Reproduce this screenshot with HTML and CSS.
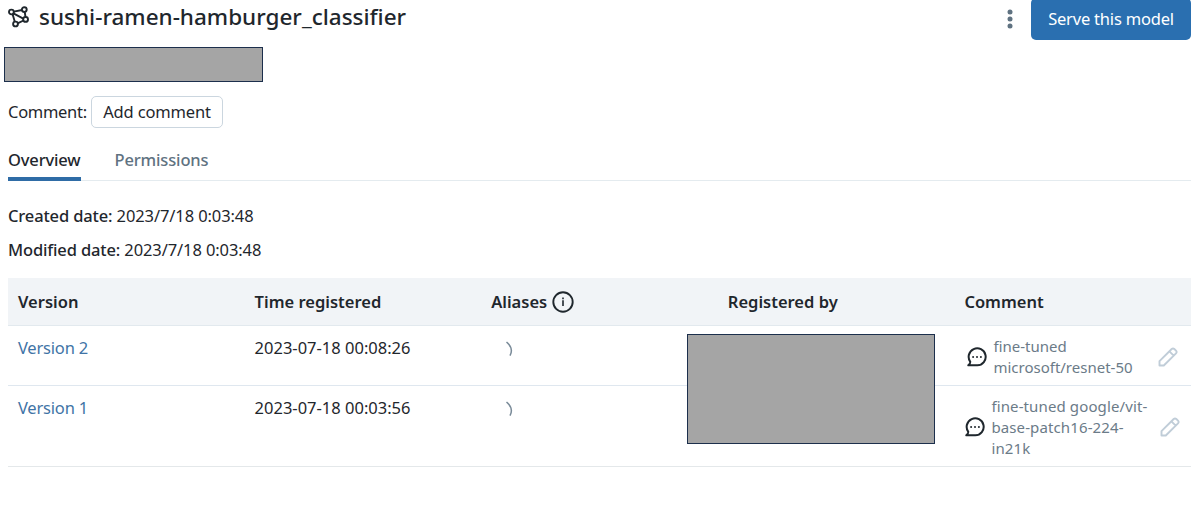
FILE: index.html
```html
<!DOCTYPE html>
<html lang="en">
<head>
    <meta charset="UTF-8">
    <meta name="viewport" content="width=device-width, initial-scale=1.0">
    <link rel="stylesheet" href="styles.css">
    <title>sushi-ramen-hamburger_classifier</title>
</head>
<body>
    <div class="page">
        <header class="header">
            <svg class="model-icon" width="22" height="22" viewBox="0 0 22 22" fill="none" stroke="#1f272d" stroke-width="1.9">
                <path d="M5.7 5.6L14.200 4M4.600 8.200L6.800 15.800M5.400 7.400L15.300 12.600M16.800 6.300L17.500 11M9.600 17.300L15.500 14.500"/>
                <circle cx="3.4" cy="6" r="2.4"/>
                <circle cx="16.300" cy="3.6" r="2.4"/>
                <circle cx="17.600" cy="13.4" r="2.4"/>
                <circle cx="7.500" cy="18" r="2.4"/>
            </svg>
            <h1>sushi-ramen-hamburger_classifier</h1>
            <button class="menu-button" aria-label="More">
                <svg width="6" height="20" viewBox="0 0 6 20" fill="#5f7281">
                    <circle cx="3" cy="3" r="2.5"/>
                    <circle cx="3" cy="10" r="2.5"/>
                    <circle cx="3" cy="17" r="2.5"/>
                </svg>
            </button>
            <button class="serve-button">Serve this model</button>
        </header>

        <div class="mask owner-mask"></div>

        <div class="comment-row">
            <span class="comment-label">Comment:</span>
            <button class="add-comment">Add comment</button>
        </div>

        <nav class="tabs">
            <a class="tab active">Overview</a>
            <a class="tab">Permissions</a>
        </nav>

        <div class="meta"><b>Created date:</b> <span>2023/7/18 0:03:48</span></div>
        <div class="meta"><b>Modified date:</b> <span>2023/7/18 0:03:48</span></div>

        <div class="table">
            <div class="row head">
                <div>Version</div>
                <div>Time registered</div>
                <div class="aliases">Aliases
                    <svg width="22" height="22" viewBox="0 0 22 22" fill="none" stroke="#1f272d">
                        <circle cx="11" cy="11" r="9.7" stroke-width="1.9"/>
                        <path d="M11 9.3V15M11 6.6V8.2" stroke-width="1.6"/>
                    </svg>
                </div>
                <div>Registered by</div>
                <div>Comment</div>
            </div>
            <div class="row first">
                <div><a class="link">Version 2</a></div>
                <div class="time">2023-07-18 00:08:26</div>
                <div><svg class="spinner" width="8" height="16" viewBox="0 0 8 16"><path d="M1.500 1Q9 7.500 5 14.600"/></svg></div>
                <div></div>
                <div class="comment">
                    <svg class="bubble" width="20" height="20" viewBox="0 0 20 20">
                        <path d="M1.300 18.300H10.300A8.500 8.500 0 1 0 3.300 14.800Q3.300 16.800 1.300 18.300Z"/>
                        <path class="dots" d="M6.100 10h.01M10 10h.01M13.900 10h.01"/>
                    </svg>
                    <p>fine-tuned<br>microsoft/resnet-50</p>
                    <svg class="pencil" width="20" height="20" viewBox="0 0 20 20">
                        <path d="M1.500 18.500V14.200L13.700 2Q15 .8 16.300 2L18 3.700Q19.200 5 18 6.300L5.800 18.500ZM11.400 4.300L15.700 8.600"/>
                    </svg>
                </div>
            </div>
            <div class="row second">
                <div><a class="link">Version 1</a></div>
                <div class="time">2023-07-18 00:03:56</div>
                <div><svg class="spinner" width="8" height="16" viewBox="0 0 8 16"><path d="M1.500 1Q9 7.500 5 14.600"/></svg></div>
                <div></div>
                <div class="comment">
                    <svg class="bubble" width="20" height="20" viewBox="0 0 20 20">
                        <path d="M1.300 18.300H10.300A8.500 8.500 0 1 0 3.300 14.800Q3.300 16.800 1.300 18.300Z"/>
                        <path class="dots" d="M6.100 10h.01M10 10h.01M13.900 10h.01"/>
                    </svg>
                    <p>fine-tuned google/vit-<br>base-patch16-224-<br>in21k</p>
                    <svg class="pencil" width="20" height="20" viewBox="0 0 20 20">
                        <path d="M1.500 18.500V14.200L13.700 2Q15 .8 16.300 2L18 3.700Q19.200 5 18 6.300L5.800 18.500ZM11.400 4.300L15.700 8.600"/>
                    </svg>
                </div>
            </div>
            <div class="mask user-mask"></div>
        </div>
    </div>
</body>
</html>
```
FILE: styles.css
```css
* {
    box-sizing: border-box;
}

body {
    margin: 0;
    background: #fff;
    color: #1f272d;
    font-family: "Noto Sans", "Open Sans", sans-serif;
    font-size: 16.5px;
    line-height: 24px;
    overflow: hidden;
}

button {
    font: inherit;
    color: inherit;
}

.page {
    padding: 0 9px 0 8px;
}

.header {
    display: flex;
    height: 40px;
}

.model-icon {
    margin-top: 6px;
}

h1 {
    flex: 1;
    margin: 1px 0 0 9px;
    font-size: 22.5px;
    line-height: 32px;
    font-weight: 500;
    letter-spacing: 0;
}

.menu-button {
    height: 20px;
    margin: 9px 18px 0 0;
    padding: 0;
    border: 0;
    background: none;
}

.menu-button svg {
    display: block;
}

.serve-button {
    width: 160px;
    height: 42px;
    margin-top: -2px;
    padding: 0;
    border: 0;
    border-radius: 5px;
    background: #2a6fb0;
    color: #fff;
    letter-spacing: -0.2px;
}

.mask {
    border: 1px solid #1c2f4c;
    background: #a5a5a5;
}

.owner-mask {
    width: 259px;
    height: 35px;
    margin: 7px 0 0 -4px;
}

.comment-row {
    display: flex;
    align-items: center;
    height: 32px;
    margin-top: 14px;
}

.comment-label {
    width: 83px;
    letter-spacing: -0.3px;
}

.add-comment {
    width: 132px;
    height: 32px;
    padding: 0;
    border: 1px solid #cbd6df;
    border-radius: 5px;
    background: #fff;
    letter-spacing: -0.15px;
}

.tabs {
    display: flex;
    gap: 34px;
    height: 53px;
    padding-top: 20px;
    border-bottom: 1px solid #e4ebef;
    font-weight: 500;
    letter-spacing: -0.15px;
}

.tab {
    height: 33px;
    color: #5f7281;
}

.tab.active {
    border-bottom: 4px solid #2f6ca6;
    color: #1f272d;
}

.meta {
    height: 24px;
    margin-top: 10px;
    letter-spacing: -0.1px;
}

.tabs + .meta {
    margin-top: 23px;
}

.meta b {
    font-weight: 500;
    letter-spacing: -0.15px;
}

.table {
    position: relative;
    margin-top: 16px;
}

.row {
    display: grid;
    grid-template-columns: repeat(5, 1fr);
    height: 60px;
    border-bottom: 1px solid #dfe7ef;
}

.row > div {
    padding: 10px 0 0 10px;
}

.row.head {
    height: 48px;
    border-bottom: 1px solid #e2e9ee;
    background: #f1f4f7;
    font-weight: 600;
}

.row.head > div {
    padding-top: 12px;
}

.row.second {
    height: 81px;
    border-color: #e4e8ea;
}

.row .aliases {
    display: flex;
    gap: 5px;
}

.aliases svg {
    margin-top: 1px;
}

.link {
    color: #3f74a6;
    letter-spacing: -0.2px;
}

.spinner {
    display: block;
    margin: 5px 0 0 14px;
    fill: none;
    stroke: #7a8b99;
    stroke-width: 1.5;
}

.row .comment {
    display: flex;
    align-items: center;
    padding: 2px 13px 0 13px;
    color: #6b7b88;
    font-size: 15px;
    line-height: 21px;
}

.comment p {
    flex: 1;
    margin: 0 0 0 6px;
    white-space: nowrap;
}

.row.second .comment {
    padding-right: 11px;
    padding-left: 11px;
}

.row.second p {
    letter-spacing: 0.12px;
}

.bubble,
.pencil {
    flex: none;
    fill: none;
    stroke: #1f272d;
    stroke-width: 2;
    stroke-linejoin: round;
}

.bubble .dots {
    stroke-linecap: round;
}

.pencil {
    stroke: #c0cdd8;
    stroke-width: 1.9;
}

/* covers the registered by cells of both rows */
.user-mask {
    position: absolute;
    top: 56px;
    left: 679px;
    width: 248px;
    height: 110px;
}
```
